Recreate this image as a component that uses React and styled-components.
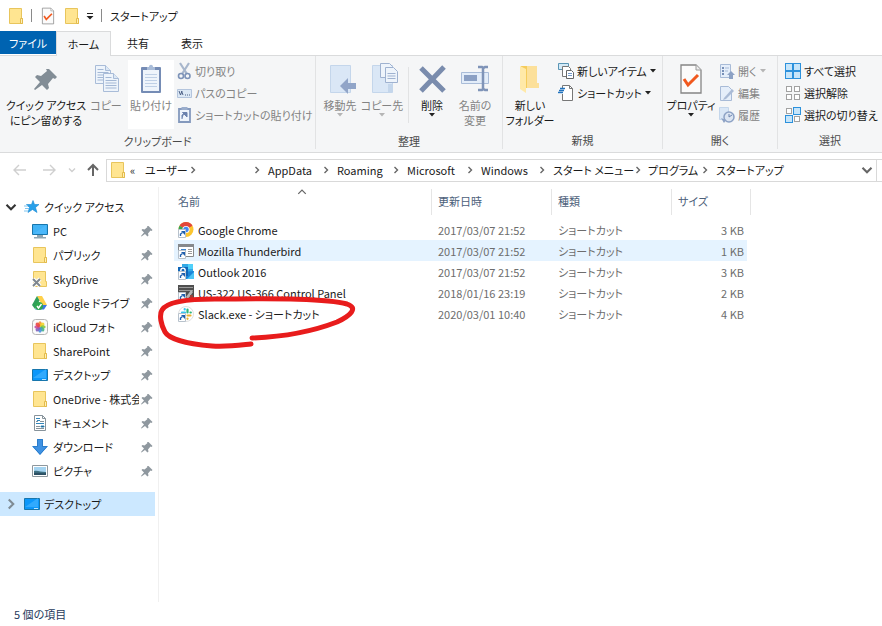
import React from "react";
import styled, { createGlobalStyle, css } from "styled-components";

const GlobalStyle = createGlobalStyle`
  * {
    box-sizing: border-box;
  }

  body {
    margin: 0;
    background: #ffffff;
    color: #1a1a1a;
    font-family: "Noto Sans CJK JP", "Noto Sans", sans-serif;
    font-size: 11px;
    line-height: 16px;
    font-feature-settings: "palt";
  }

  button {
    font: inherit;
    color: inherit;
    border: none;
    background: none;
    padding: 0;
    cursor: pointer;
    font-feature-settings: inherit;
  }

  svg {
    display: block;
    flex: none;
  }
`;

const Window = styled.div`
  display: flex;
  flex-direction: column;
  min-height: 100vh;
  overflow: hidden;
`;

const TitleBar = styled.header`
  display: flex;
  align-items: center;
  height: 31px;
  padding-left: 8px;
`;

const TitleDivider = styled.span`
  width: 1px;
  height: 13px;
  background: #8a8a8a;
  margin: 0 8px 0 7px;
`;

const QuickButton = styled.button`
  margin-left: ${(props) => props.$gap || 0}px;
`;

const Title = styled.h1`
  font-size: 11px;
  font-weight: 400;
  margin: 0;
`;

const TabBar = styled.nav`
  display: flex;
  height: 25px;
  border-bottom: 1px solid #dadbdc;
`;

const Tab = styled.button`
  width: 54px;
  height: 24px;
  text-align: center;

  ${(props) =>
    props.$file &&
    css`
      width: 56px;
      height: 23px;
      background: #0063b1;
      color: #ffffff;
    `}

  ${(props) =>
    props.$active &&
    css`
      height: 25px;
      width: 55px;
      background: #f5f6f7;
      border: 1px solid #dadbdc;
      border-bottom: none;
    `}
`;

const Ribbon = styled.section`
  display: flex;
  height: 97px;
  background: #f5f6f7;
  border-bottom: 1px solid #dadbdc;
`;

const Group = styled.div`
  display: flex;
  flex-direction: column;
  flex: ${(props) => (props.$width ? `0 0 ${props.$width}px` : "1 0 104px")};
  min-width: 0;
  padding-top: 4px;
  margin-bottom: 3px;
  border-right: ${(props) => (props.$width ? "1px solid #e2e3e4" : "none")};
`;

const GroupTools = styled.div`
  display: flex;
  height: 69px;
  padding-left: ${(props) => props.$indent}px;
  gap: ${(props) => props.$gap || 0}px;
`;

const GroupLabel = styled.div`
  margin-top: 3px;
  line-height: 18px;
  text-align: center;
  color: #4a4a4a;
`;

const BigButton = styled.button`
  display: flex;
  flex-direction: column;
  align-items: center;
  flex: none;
  width: ${(props) => props.$width}px;
  padding-top: 3px;
  line-height: 15px;
  white-space: nowrap;
  color: ${(props) => (props.$dim ? "#838383" : "#1a1a1a")};
  background: ${(props) => (props.$lit ? "#ffffff" : "transparent")};

  > svg:first-child {
    margin-bottom: 3px;
  }
`;

const SmallColumn = styled.div`
  display: flex;
  flex-direction: column;
`;

const SmallButton = styled.button`
  display: flex;
  align-items: center;
  gap: 3px;
  height: 22px;
  white-space: nowrap;
  color: ${(props) => (props.$dim ? "#838383" : "#1a1a1a")};
`;

const ToolDivider = styled.span`
  width: 1px;
  height: 56px;
  margin-top: 7px;
  background: #e2e3e4;
`;

const AddressBar = styled.div`
  display: flex;
  align-items: center;
  height: 34px;
  padding-left: 12px;
`;

const NavButtons = styled.div`
  display: flex;
  align-items: center;
  width: 94px;
`;

const NavButton = styled.button`
  width: ${(props) => props.$width}px;
`;

const AddressBox = styled.div`
  display: flex;
  align-items: center;
  flex: 1;
  height: 23px;
  padding-left: 3px;
  border: 1px solid #d9d9d9;
  border-right: none;
`;

const Crumbs = styled.ol`
  display: flex;
  align-items: center;
  flex: 1;
  list-style: none;
  margin: 0;
  padding: 0 0 0 4px;
  white-space: nowrap;
`;

const Crumb = styled.li`
  display: flex;
  align-items: center;
  justify-content: space-between;
  flex: none;
  width: ${(props) => props.$width}px;
  padding-right: ${(props) => (props.$plain ? 0 : 7)}px;
`;

const CrumbLink = styled.a`
  color: inherit;
  text-decoration: none;
`;

const DropButton = styled.button`
  display: flex;
  align-items: center;
  justify-content: center;
  width: 20px;
  height: 21px;
  margin-right: 5px;
  border-right: 1px solid #d9d9d9;
`;

const Body = styled.div`
  display: flex;
  flex: 1;
`;

const Sidebar = styled.nav`
  flex: 0 0 159px;
  min-width: 0;
  padding: 8px 3px 0 0;
  border-right: 1px solid #f0f0f0;
`;

const TreeRow = styled.a`
  display: flex;
  align-items: center;
  height: 24px;
  padding-left: ${(props) => (props.$nested ? 32 : 4)}px;
  margin-top: ${(props) => (props.$selected ? 9 : 0)}px;
  background: ${(props) => (props.$selected ? "#cce8ff" : "transparent")};
  color: inherit;
  text-decoration: none;
  white-space: nowrap;
`;

const Expander = styled.span`
  display: flex;
  justify-content: center;
  width: 13px;
  margin-right: 7px;
`;

const TreeLabel = styled.span`
  flex: 1;
  min-width: 0;
  overflow: hidden;
  margin-left: ${(props) => (props.$nested ? 5 : 4)}px;
`;

const Content = styled.main`
  position: relative;
  flex: 1;
  padding-left: 15px;
`;

const FileTable = styled.table`
  width: 577px;
  border-collapse: collapse;
  table-layout: fixed;
`;

const HeadCell = styled.th`
  height: 32px;
  padding: 0 0 4px ${(props) => (props.$first ? 4 : 6)}px;
  font-weight: 400;
  text-align: left;
  color: #4c607a;
  background: linear-gradient(#e5e5e5, #e5e5e5) right 2px / 1px 26px no-repeat;
`;

const SortMark = styled.span`
  position: absolute;
  left: 138px;
  top: 0;
`;

const FileRow = styled.tr`
  height: 21px;
  background: ${(props) => (props.$hover ? "#e5f3ff" : "transparent")};
`;

const FileCell = styled.td`
  padding: 0 3px 0 6px;
  color: #6d6d6d;
  text-align: ${(props) => (props.$right ? "right" : "left")};
`;

const Gutter = styled.td`
  background: #ffffff;
  padding: 0;
`;

const NameCell = styled.td`
  padding: 0 0 0 4px;
`;

const FileName = styled.span`
  display: flex;
  align-items: center;
  gap: 4px;
`;

const RedMark = styled.svg`
  position: absolute;
  left: -6px;
  top: 102px;
  pointer-events: none;
`;

const StatusBar = styled.footer`
  height: 24px;
  padding: 4px 14px;
  color: #1e395b;
`;

const FolderIcon = () => (
  <svg width="16" height="18" viewBox="0 0 16 18">
    <path d="M1.500 1.500h12v10h1v5h-13z" fill="#ffe591" stroke="#e8c55c" />
    <path d="M12.500 11.500h2v5h-2z" fill="#fff0b8" stroke="#e3bb4c" />
  </svg>
);

const PageCheckIcon = ({ width = 16, height = 18 }) => (
  <svg width={width} height={height} viewBox="0 0 24 32">
    <path d="M2 2h15l5 5v23H2z" fill="#fbfbfb" stroke="#858585" strokeWidth="1.3" />
    <path d="M17 2v5h5" fill="#eeeeee" stroke="#9a9a9a" />
    <path d="M5 16l4 6 10-10" fill="none" stroke="#f1591f" strokeWidth="3" />
  </svg>
);

const DownArrow = ({ color = "#222222" }) => (
  <svg width="6" height="4" viewBox="0 0 6 4">
    <path d="M0 0h6L3 3.6z" fill={color} />
  </svg>
);

const PinShape = ({ size = 32, color = "#828d96" }) => (
  <svg width={size} height={size} viewBox="0 0 32 32">
    <path
      d="M19 6l8 8-2 2-2-1-5 6 1 4-2 2-5-5-7 5-1-1 6-7-5-5 2-2 4 1 6-5-1-2z"
      fill={color}
    />
  </svg>
);

const page = (x, y) => (
  <g transform={`translate(${x} ${y})`}>
    <path d="M0 0h10l5 5v13H0z" fill="#eef4fb" stroke="#a9bcd8" />
    <path d="M10 0v5h5" fill="#dce8f5" stroke="#a9bcd8" />
    <path d="M2 4h6M2 7h11M2 9.500h11M2 12h11M2 14.500h11" stroke="#a4b8d5" />
  </g>
);

const CopyIcon = () => (
  <svg width="32" height="32" viewBox="0 0 32 32">
    {page(5.5, 2.5)}
    {page(13.5, 10.5)}
  </svg>
);

const PasteIcon = () => (
  <svg width="32" height="32" viewBox="0 0 32 32">
    <rect x="6" y="4" width="20" height="26" rx="1" fill="#758cb5" />
    <path d="M8 7h16v21H8z" fill="#eef4fb" />
    <path d="M12 7V4h2c0-3 4-3 4 0h2v3z" fill="#a9bcd8" />
    <path d="M10 11.500h12M10 14.500h12M10 17.500h12M10 20.500h12M10 23.500h12" stroke="#bfd0e6" />
  </svg>
);

const CutIcon = () => (
  <svg width="15" height="18" viewBox="0 0 15 18">
    <path d="M3 1l7 11M12 1L5 12" stroke="#a7b6cc" strokeWidth="2.200" />
    <circle cx="4" cy="14" r="2.500" fill="none" stroke="#7d93b8" strokeWidth="1.600" />
    <circle cx="10.500" cy="14" r="2.500" fill="none" stroke="#7d93b8" strokeWidth="1.600" />
  </svg>
);

const PathIcon = () => (
  <svg width="15" height="18" viewBox="0 0 15 18">
    <path d="M.5 5.500h14v8H.5z" fill="#dce8f5" stroke="#b4c5dd" />
    <path d="M2 7l1.500 4L5 7M4.500 7L6 11M8 11h1M10 11h1M12 11h1" fill="none" stroke="#4d6187" />
  </svg>
);

const PasteLinkIcon = () => (
  <svg width="15" height="18" viewBox="0 0 15 18">
    <path d="M2 3h11v13H2z" fill="#eef4fb" stroke="#8499bd" strokeWidth="1.800" />
    <path d="M4.500 1h6v3h-6z" fill="#9aadcc" />
    <path d="M5 13V9l2-1M5.500 6.500H10V11z" fill="#6b82ad" stroke="#6b82ad" />
  </svg>
);

const MoveIcon = () => (
  <svg width="32" height="32" viewBox="0 0 32 32">
    <path d="M6.500 2.500h20v27h-20z" fill="#dae7f6" stroke="#c4d6eb" />
    <path d="M16 23l8-8v5h8v6h-8v5z" fill="#91a5c8" />
  </svg>
);

const CopyToIcon = () => (
  <svg width="32" height="32" viewBox="0 0 32 32">
    <path d="M6.500 2.500h20v27h-20z" fill="#dae7f6" stroke="#c4d6eb" />
    <path d="M22 21h4v9h-4z" fill="#c4d6eb" />
    <g transform="translate(14.500 .5)" stroke="#9fb2d0" fill="#eef4fb">
      <path d="M0 0h9l3 3v11H0z" />
      <path d="M5 4h8l4 4v11H5z" />
      <path d="M7 10h8M7 12.500h8M7 15h8" />
    </g>
  </svg>
);

const DeleteIcon = () => (
  <svg width="32" height="32" viewBox="0 0 32 32">
    <path d="M5 5l23 23M28 4L5 28" stroke="#7a8cad" strokeWidth="5" />
  </svg>
);

const RenameIcon = () => (
  <svg width="32" height="32" viewBox="0 0 32 32">
    <path d="M2.500 9.500h27v11h-27z" fill="#e3edf9" stroke="#a9bcd8" />
    <path d="M5 12h13v6H5z" fill="#8ba0c4" />
    <path d="M19 4h4l1.500 1L26 4h3M24 5v22M19 27h4l1.500-1L26 27h3" fill="none" stroke="#7f94b8" strokeWidth="2.500" />
  </svg>
);

const NewFolderIcon = () => (
  <svg width="32" height="32" viewBox="0 0 32 32">
    <path d="M7 3h16v22H7z" fill="#f5cc5c" />
    <path d="M13 3h10v17h2v5H13z" fill="#fce09a" />
    <path d="M6 3l6 3v24l-6-4z" fill="#ffe9a8" />
  </svg>
);

const NewItemIcon = () => (
  <svg width="16" height="18" viewBox="0 0 16 18">
    <path d="M.5 1.500h10v6H.5z" fill="#d4eaf7" stroke="#5995b5" />
    <path d="M4.500 4.500h6l2 2v8h-8z" fill="#ffffff" stroke="#777777" />
    <path d="M8.500 8.500h5l2 2v6h-7z" fill="#ffffff" stroke="#666666" />
    <path d="M10 11.500h4M10 13.500h4" stroke="#7499c9" />
  </svg>
);

const ShortcutIcon = () => (
  <svg width="16" height="18" viewBox="0 0 16 18">
    <path d="M4.500 1.500h7l3 3v12h-10z" fill="#ffffff" stroke="#777777" />
    <path d="M11.500 1.500v3h3" fill="none" stroke="#777777" />
    <path d="M1 4h6v6H0V8h4V6H1z" fill="#ffffff" />
    <path d="M2 4.500h5M1 6.500h5M0 8.500h5" stroke="#2373bd" strokeWidth="1.300" />
  </svg>
);

const OpenIcon = () => (
  <svg width="16" height="18" viewBox="0 0 16 18">
    <path d="M1.500 2.500h10v13h-10z" fill="#e5eefa" stroke="#a8bbd7" />
    <path d="M3 5h2v2H3zM3 8h2v2H3zM3 11h2v2H3z" fill="#7890b8" />
    <path d="M6 6h4M6 9h3" stroke="#a8bbd7" />
    <path d="M12 9l4 4h-2v4h-4v-4H8z" fill="#8da2c5" />
  </svg>
);

const EditIcon = () => (
  <svg width="16" height="18" viewBox="0 0 16 18">
    <path d="M1.500 2.500h8l3 3v11h-11z" fill="#e5eefa" stroke="#a8bbd7" />
    <path d="M5 14l8-9 2 2-8 8-3 1z" fill="#aabbd6" />
  </svg>
);

const HistoryIcon = () => (
  <svg width="16" height="18" viewBox="0 0 16 18">
    <path d="M.5 1.500h9v12h-9z" fill="#dae7f6" stroke="#c4d6eb" />
    <circle cx="10" cy="11" r="5" fill="#dce5f2" stroke="#8da2c5" strokeWidth="1.500" />
    <path d="M10 8v3l3-2" fill="none" stroke="#6d84ae" />
    <path d="M2 12l3 5 2-3z" fill="#8da2c5" />
  </svg>
);

// filled lists which of the four tiles are drawn as selected
const TilesIcon = ({ filled }) => (
  <svg width="16" height="18" viewBox="0 0 16 18">
    {[0, 1, 2, 3].map((i) => {
      const on = filled.includes(i);
      return (
        <rect
          key={i}
          x={(i % 2) * 8 + (on ? 0.5 : 1.5)}
          y={Math.floor(i / 2) * 8 + (on ? 1.5 : 2.5)}
          width={on ? 7 : 5}
          height={on ? 7 : 5}
          fill={on ? "#c6e5fa" : "#ffffff"}
          stroke={on ? "#2c91dc" : "#a2a2a2"}
        />
      );
    })}
  </svg>
);

const Arrow = ({ type, color }) => {
  const paths = {
    back: "M14 7H2M7 2L2 7l5 5",
    forward: "M1 7h12M8 2l5 5-5 5",
    up: "M7 13V2M2 7l5-5 5 5",
  };
  return (
    <svg width="14" height="14" viewBox="0 0 14 14">
      <path d={paths[type]} fill="none" stroke={color} strokeWidth={type === "up" ? 2 : 1.4} />
    </svg>
  );
};

const Chevron = ({ dir = "right", size = 8, color = "#666666", weight = 1.4 }) => {
  const paths = {
    right: "M2.500 1L5.500 4l-3 3",
    down: "M1 2.500L4 5.500l3-3",
    up: "M1 5.500L4 2.500l3 3",
  };
  return (
    <svg width={size} height={size} viewBox="0 0 8 8">
      <path d={paths[dir]} fill="none" stroke={color} strokeWidth={weight} />
    </svg>
  );
};

const StarIcon = () => (
  <svg width="16" height="16" viewBox="0 0 16 16">
    <path d="M9 1.500l1.500 4H15l-3.500 3L13 13.500l-4.500-3L4 13.500l1.500-5L2.500 5.500h5z" fill="#27a0ea" stroke="#1587d2" strokeWidth=".6" />
    <path d="M0 7h4M1 9.500h4M0 12h4" stroke="#7fc4ef" />
  </svg>
);

const ScreenIcon = ({ stand }) => (
  <svg width="16" height="16" viewBox="0 0 16 16">
    <path d={stand ? "M.5 1.500h15v10H.5z" : "M.5 2.500h15v11H.5z"} fill={stand ? "#42b3f5" : "#0c97fa"} stroke="#1876ac" />
    <path d="M1 11L14 2v9z" fill="#56bdff" opacity=".5" />
    {stand ? (
      <path d="M5 12h6v2h3v1.500H2V14h3z" fill="#90a7b3" />
    ) : (
      <path d="M10 12.500h4" stroke="#b9e5ff" />
    )}
  </svg>
);

const SkyDriveIcon = () => (
  <svg width="16" height="18" viewBox="0 0 16 18">
    <path d="M1.500 1.500h12v10h1v5h-13z" fill="#ffe591" stroke="#e8c55c" />
    <path d="M1 9l7 7M8 9l-7 7" stroke="#ffffff" strokeWidth="4" />
    <path d="M1 9l7 7M8 9l-7 7" stroke="#7f878e" strokeWidth="2" />
  </svg>
);

const DriveIcon = () => (
  <svg width="16" height="16" viewBox="0 0 16 16">
    <path d="M5 1h5l5 9h-5z" fill="#ffd04b" />
    <path d="M5 1l2.500 4.500L3 14 0 10z" fill="#2f9e5a" />
    <path d="M6 10h9l-3 4.500H3z" fill="#3b76df" />
    <circle cx="7" cy="11" r="4" fill="#2fa84f" />
    <path d="M5 11l1.500 2L9.500 9" fill="none" stroke="#ffffff" strokeWidth="1.400" />
  </svg>
);

const PhotosIcon = () => {
  const petals = ["#f5942d", "#f3d32a", "#8ac640", "#45b08c", "#4a90dd", "#8060bd", "#c44f9d", "#ea4745"];
  return (
    <svg width="16" height="16" viewBox="0 0 16 16">
      <rect x=".5" y=".5" width="15" height="15" rx="3" fill="#fafafa" stroke="#b5b5b5" />
      {petals.map((fill, i) => (
        <ellipse key={fill} cx="8" cy="5" rx="1.800" ry="2.700" fill={fill} opacity=".9" transform={`rotate(${i * 45} 8 8)`} />
      ))}
    </svg>
  );
};

const DocumentIcon = () => (
  <svg width="16" height="16" viewBox="0 0 16 16">
    <path d="M2.500.5h8l3 3v12h-11z" fill="#ffffff" stroke="#87939b" />
    <path d="M10.500.5v3h3M4 6.500h2M8 6.500h4M4 11.500h4M4 13.500h8" fill="none" stroke="#87939b" />
    <path d="M4 3.500h4M5 5.500h3M4 8.500h8M9 11h3v1H9z" stroke="#3187bd" />
  </svg>
);

const DownloadIcon = () => (
  <svg width="16" height="16" viewBox="0 0 16 16">
    <path d="M5 0h6v7h5l-8 9-8-9h5z" fill="#3f92e3" />
    <path d="M5.500.5h5v7H15L8 15.300 1 7.500h4.500z" fill="none" stroke="#2b7dcb" />
  </svg>
);

const PictureIcon = () => (
  <svg width="16" height="16" viewBox="0 0 16 16">
    <path d="M.5 2.500h15v11H.5z" fill="#ffffff" stroke="#8e989e" />
    <path d="M2 4h12v8H2z" fill="#a5d4f1" />
    <path d="M2 8c4-1 6 1 12 1v3H2z" fill="#3f7183" />
    <path d="M2 10c5-1 8 1 12 0v2H2z" fill="#2d5064" />
  </svg>
);

const ShortcutBadge = () => (
  <g>
    <path d="M.5 7.500h7v8h-7z" fill="#ffffff" stroke="#b8c2cc" />
    <path d="M2.500 14v-2L4.500 10.500" fill="none" stroke="#1f5fae" strokeWidth="1.400" />
    <path d="M3 9h4v4z" fill="#1f5fae" />
  </g>
);

const ChromeIcon = () => (
  <svg width="16" height="16" viewBox="0 0 16 16">
    <circle cx="8" cy="7.500" r="7.500" fill="#fbc52f" />
    <path d="M8 7.500L1.500 3.800A7.500 7.500 0 0 1 14.500 3.800z" fill="#e3463a" />
    <path d="M8 7.500L1.500 3.800A7.500 7.500 0 0 0 8 15z" fill="#36a353" />
    <circle cx="8" cy="7.500" r="3.600" fill="#ffffff" />
    <circle cx="8" cy="7.500" r="2.700" fill="#4587f0" />
    <ShortcutBadge />
  </svg>
);

const ProgramIcon = () => (
  <svg width="16" height="16" viewBox="0 0 16 16">
    <path d="M.5 1.500h15v12H.5z" fill="#ffffff" stroke="#86898c" />
    <path d="M0 1h16v3H0z" fill="#86898c" />
    <path d="M3 6h5v5H3z" fill="#3b85cf" />
    <path d="M10 6.500h4M10 8.500h4M10 10.500h4" stroke="#9a9a9a" />
    <ShortcutBadge />
  </svg>
);

const OutlookIcon = () => (
  <svg width="16" height="16" viewBox="0 0 16 16">
    <path d="M4 0h11v9H4z" fill="#32a9e6" />
    <path d="M10 0h5v5h-5z" fill="#50d0fa" />
    <path d="M4 8l12-1v8H4z" fill="#1c86d8" />
    <path d="M9 15l7-7v7z" fill="#4cc5f5" />
    <path d="M0 3h10v9H0z" fill="#0f66b8" />
    <ellipse cx="5" cy="6.500" rx="2.200" ry="2.400" fill="none" stroke="#ffffff" strokeWidth="1.400" />
    <ShortcutBadge />
  </svg>
);

const PanelIcon = () => (
  <svg width="16" height="16" viewBox="0 0 16 16">
    <path d="M0 0h16v14H0z" fill="#4f4f4f" />
    <path d="M1 2.500h14M1 5.500h14" stroke="#9b9b9b" />
    <path d="M8 12l5-7 2 2-5 7z" fill="#b7b7b7" />
    <path d="M12 10h3v4h-3z" fill="#984139" />
    <ShortcutBadge />
  </svg>
);

const SlackIcon = () => (
  <svg width="16" height="16" viewBox="0 0 16 16">
    <circle cx="8" cy="8" r="7.500" fill="#ffffff" stroke="#e0e0e0" />
    <g strokeWidth="2.200" strokeLinecap="round">
      <path d="M4 6.500h3M6.700 3v.5" stroke="#36c5f0" />
      <path d="M9.500 3.500v3M12.500 6.500h.3" stroke="#2eb67d" />
      <path d="M9.500 9.500h3M9.500 12.500v.3" stroke="#ecb22e" />
      <path d="M6.500 9.500v3" stroke="#e01e5a" />
    </g>
    <ShortcutBadge />
  </svg>
);

const crumbs = [
  { label: "ユーザー", width: 59 },
  { label: "", width: 64 },
  { label: "AppData", width: 69 },
  { label: "Roaming", width: 70 },
  { label: "Microsoft", width: 74 },
  { label: "Windows", width: 72 },
  { label: "スタート メニュー", width: 95 },
  { label: "プログラム", width: 68 },
  { label: "スタートアップ", width: 80 },
];

const places = [
  { label: "PC", icon: <ScreenIcon stand /> },
  { label: "パブリック", icon: <FolderIcon /> },
  { label: "SkyDrive", icon: <SkyDriveIcon /> },
  { label: "Google ドライブ", icon: <DriveIcon /> },
  { label: "iCloud フォト", icon: <PhotosIcon /> },
  { label: "SharePoint", icon: <FolderIcon /> },
  { label: "デスクトップ", icon: <ScreenIcon /> },
  { label: "OneDrive - 株式会社", icon: <FolderIcon /> },
  { label: "ドキュメント", icon: <DocumentIcon /> },
  { label: "ダウンロード", icon: <DownloadIcon /> },
  { label: "ピクチャ", icon: <PictureIcon /> },
];

const files = [
  { name: "Google Chrome", date: "2017/03/07 21:52", size: "3 KB", icon: <ChromeIcon /> },
  { name: "Mozilla Thunderbird", date: "2017/03/07 21:52", size: "1 KB", icon: <ProgramIcon />, hover: true },
  { name: "Outlook 2016", date: "2017/03/07 21:52", size: "3 KB", icon: <OutlookIcon /> },
  { name: "US-322 US-366 Control Panel", date: "2018/01/16 23:19", size: "2 KB", icon: <PanelIcon /> },
  { name: "Slack.exe - ショートカット", date: "2020/03/01 10:40", size: "4 KB", icon: <SlackIcon /> },
];

const RibbonTools = () => (
  <Ribbon>
    <Group $width={316}>
      <GroupTools $indent={2}>
        <BigButton $width={88}>
          <PinShape />
          <span>クイック アクセス</span>
          <span>にピン留めする</span>
        </BigButton>
        <BigButton $width={32} $dim>
          <CopyIcon />
          <span>コピー</span>
        </BigButton>
        <GroupTools $indent={6} $gap={3}>
          <BigButton $width={46} $dim $lit>
            <PasteIcon />
            <span>貼り付け</span>
          </BigButton>
          <SmallColumn>
            <SmallButton $dim>
              <CutIcon />
              切り取り
            </SmallButton>
            <SmallButton $dim>
              <PathIcon />
              パスのコピー
            </SmallButton>
            <SmallButton $dim>
              <PasteLinkIcon />
              ショートカットの貼り付け
            </SmallButton>
          </SmallColumn>
        </GroupTools>
      </GroupTools>
      <GroupLabel>クリップボード</GroupLabel>
    </Group>

    <Group $width={187}>
      <GroupTools $indent={3}>
        <BigButton $width={42} $dim>
          <MoveIcon />
          <span>移動先</span>
          <DownArrow color="#b5b5b5" />
        </BigButton>
        <BigButton $width={42} $dim>
          <CopyToIcon />
          <span>コピー先</span>
          <DownArrow color="#b5b5b5" />
        </BigButton>
        <GroupTools $indent={5} $gap={2}>
          <ToolDivider />
          <BigButton $width={42}>
            <DeleteIcon />
            <span>削除</span>
            <DownArrow />
          </BigButton>
          <BigButton $width={40} $dim>
            <RenameIcon />
            <span>名前の</span>
            <span>変更</span>
          </BigButton>
        </GroupTools>
      </GroupTools>
      <GroupLabel>整理</GroupLabel>
    </Group>

    <Group $width={160}>
      <GroupTools $indent={4} $gap={5}>
        <BigButton $width={46}>
          <NewFolderIcon />
          <span>新しい</span>
          <span>フォルダー</span>
        </BigButton>
        <SmallColumn>
          <SmallButton>
            <NewItemIcon />
            新しいアイテム
            <DownArrow />
          </SmallButton>
          <SmallButton>
            <ShortcutIcon />
            ショートカット
            <DownArrow />
          </SmallButton>
        </SmallColumn>
      </GroupTools>
      <GroupLabel>新規</GroupLabel>
    </Group>

    <Group $width={115}>
      <GroupTools $indent={4} $gap={4}>
        <BigButton $width={48}>
          <PageCheckIcon width={24} height={32} />
          <span>プロパティ</span>
          <DownArrow />
        </BigButton>
        <SmallColumn>
          <SmallButton $dim>
            <OpenIcon />
            開く
            <DownArrow color="#b5b5b5" />
          </SmallButton>
          <SmallButton $dim>
            <EditIcon />
            編集
          </SmallButton>
          <SmallButton $dim>
            <HistoryIcon />
            履歴
          </SmallButton>
        </SmallColumn>
      </GroupTools>
      <GroupLabel>開く</GroupLabel>
    </Group>

    <Group>
      <GroupTools $indent={7}>
        <SmallColumn>
          <SmallButton>
            <TilesIcon filled={[0, 1, 2, 3]} />
            すべて選択
          </SmallButton>
          <SmallButton>
            <TilesIcon filled={[]} />
            選択解除
          </SmallButton>
          <SmallButton>
            <TilesIcon filled={[1, 2]} />
            選択の切り替え
          </SmallButton>
        </SmallColumn>
      </GroupTools>
      <GroupLabel>選択</GroupLabel>
    </Group>
  </Ribbon>
);

const App = () => {
  return (
    <Window>
      <GlobalStyle />
      <TitleBar>
        <FolderIcon />
        <TitleDivider />
        <QuickButton aria-label="プロパティ">
          <PageCheckIcon />
        </QuickButton>
        <QuickButton $gap={8} aria-label="新しいフォルダー">
          <FolderIcon />
        </QuickButton>
        <QuickButton $gap={6} aria-label="カスタマイズ">
          <svg width="8" height="8" viewBox="0 0 8 8">
            <path d="M1 1.500h6" stroke="#222222" />
            <path d="M.5 4h7L4 7.500z" fill="#222222" />
          </svg>
        </QuickButton>
        <TitleDivider />
        <Title>スタートアップ</Title>
      </TitleBar>

      <TabBar>
        <Tab $file>ファイル</Tab>
        <Tab $active>ホーム</Tab>
        <Tab>共有</Tab>
        <Tab>表示</Tab>
      </TabBar>

      <RibbonTools />

      <AddressBar>
        <NavButtons>
          <NavButton $width={30} aria-label="戻る">
            <Arrow type="back" color="#cfcfcf" />
          </NavButton>
          <NavButton $width={26} aria-label="進む">
            <Arrow type="forward" color="#cfcfcf" />
          </NavButton>
          <NavButton $width={18} aria-label="最近表示した場所">
            <Chevron dir="down" color="#cfcfcf" />
          </NavButton>
          <NavButton $width={14} aria-label="上へ">
            <Arrow type="up" color="#666666" />
          </NavButton>
        </NavButtons>
        <AddressBox>
          <FolderIcon />
          <Crumbs>
            <Crumb $width={15} $plain>
              «
            </Crumb>
            {crumbs.map((crumb, i) => (
              <Crumb key={i} $width={crumb.width} $plain={i === crumbs.length - 1}>
                <CrumbLink href="#">{crumb.label}</CrumbLink>
                {i < crumbs.length - 1 && <Chevron />}
              </Crumb>
            ))}
          </Crumbs>
          <DropButton aria-label="履歴を表示">
            <Chevron dir="down" size={12} />
          </DropButton>
        </AddressBox>
      </AddressBar>

      <Body>
        <Sidebar>
          <TreeRow href="#">
            <Expander>
              <Chevron dir="down" size={12} color="#333333" />
            </Expander>
            <StarIcon />
            <TreeLabel>クイック アクセス</TreeLabel>
          </TreeRow>
          {places.map((place) => (
            <TreeRow key={place.label} href="#" $nested>
              {place.icon}
              <TreeLabel $nested>{place.label}</TreeLabel>
              <PinShape size={16} color="#8f989f" />
            </TreeRow>
          ))}
          <TreeRow href="#" $selected>
            <Expander>
              <Chevron size={12} color="#7f8b94" />
            </Expander>
            <ScreenIcon />
            <TreeLabel>デスクトップ</TreeLabel>
          </TreeRow>
        </Sidebar>

        <Content>
          <FileTable>
            <colgroup>
              <col width="258" />
              <col width="120" />
              <col width="120" />
              <col width="75" />
              <col width="4" />
            </colgroup>
            <thead>
              <tr>
                <HeadCell $first>名前</HeadCell>
                <HeadCell>更新日時</HeadCell>
                <HeadCell>種類</HeadCell>
                <HeadCell colSpan={2}>サイズ</HeadCell>
              </tr>
            </thead>
            <tbody>
              {files.map((file) => (
                <FileRow key={file.name} $hover={file.hover}>
                  <NameCell>
                    <FileName>
                      {file.icon}
                      {file.name}
                    </FileName>
                  </NameCell>
                  <FileCell>{file.date}</FileCell>
                  <FileCell>ショートカット</FileCell>
                  <FileCell $right>{file.size}</FileCell>
                  <Gutter />
                </FileRow>
              ))}
            </tbody>
          </FileTable>
          <SortMark>
            <Chevron dir="up" size={10} weight={1} />
          </SortMark>
          <RedMark width="210" height="64" viewBox="0 0 210 64">
            <path
              d="M98 55C88 56 75 58 59 57C35 55 16 50 12 43C8 36 6 26 9 21C14 12 38 10 62 10C98 10 170 8 194 15C206 19 197 27 184 33C158 43 127 48 99 49"
              fill="none"
              stroke="#e81c1c"
              strokeWidth="5"
              strokeLinecap="round"
              strokeLinejoin="round"
            />
          </RedMark>
        </Content>
      </Body>

      <StatusBar>5 個の項目</StatusBar>
    </Window>
  );
};

export default App;
